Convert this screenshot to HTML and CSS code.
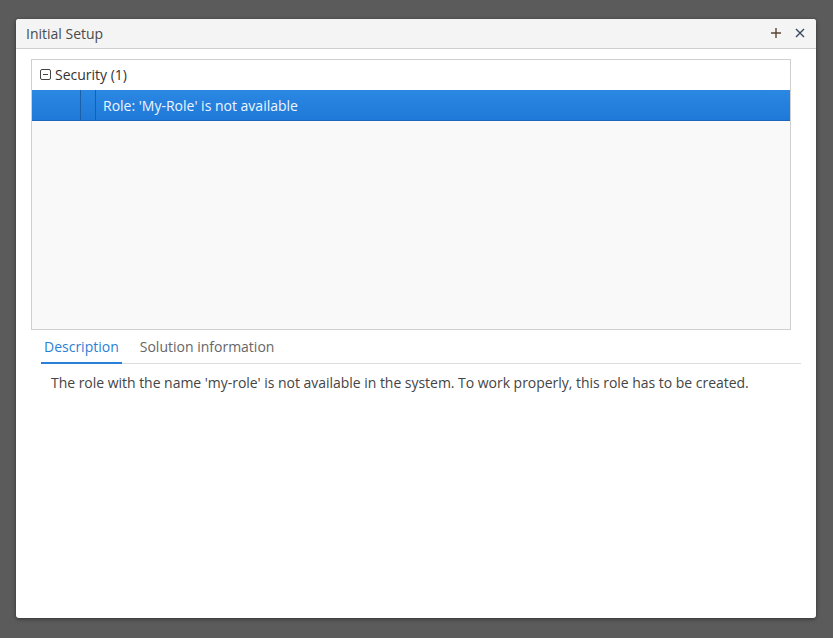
FILE: index.html
```html
<!DOCTYPE html>
<html>
<head>
<meta charset="utf-8">
<link rel="stylesheet" href="styles.css">
</head>
<body>
<div class="window">
  <div class="header">
    <span class="title">Initial Setup</span>
    <div class="actions">
      <svg class="icon" width="12" height="12" viewBox="0 0 12 12"><path d="M6 1v10M1 6h10" stroke="#5a4430" stroke-width="1.4" fill="none"/></svg>
      <svg class="icon" width="12" height="12" viewBox="0 0 12 12"><path d="M2 2l8 8M10 2l-8 8" stroke="#3a4a5e" stroke-width="1.4" fill="none"/></svg>
    </div>
  </div>
  <div class="content">
    <div class="tree">
      <div class="group">
        <svg class="toggle" width="11" height="11" viewBox="0 0 11 11"><rect x="0.5" y="0.5" width="10" height="10" rx="1.5" fill="none" stroke="#444"/><path d="M3 5.5h5" stroke="#444"/></svg>
        <span>Security (1)</span>
      </div>
      <div class="item selected">
        <div class="cell c1"></div>
        <div class="cell c2"></div>
        <div class="cell c3">Role: 'My-Role' is not available</div>
      </div>
    </div>
    <div class="tabs">
      <div class="tab active">Description</div>
      <div class="tab">Solution information</div>
    </div>
    <div class="desc">The role with the name 'my-role' is not available in the system. To work properly, this role has to be created.</div>
  </div>
</div>
</body>
</html>
```
FILE: styles.css
```css
html, body { margin: 0; padding: 0; }
body {
  background: #5b5b5b;
  width: 833px;
  height: 638px;
  font-family: "Open Sans", sans-serif;
  font-size: 14px;
  color: #444;
  padding: 19px 0 0 16px;
  box-sizing: border-box;
}
.window {
  width: 800px;
  height: 599px;
  background: #fff;
  border-radius: 3px;
  box-shadow: 0 1px 4px rgba(0,0,0,0.45);
  display: flex;
  flex-direction: column;
  overflow: hidden;
}
.header {
  height: 29px;
  background: #f4f4f4;
  border-bottom: 1px solid #cfcfcf;
  display: flex;
  align-items: center;
  padding: 0 10px;
}
.title { color: #4a4a4a; font-size: 14px; flex: 1; }
.actions { display: flex; gap: 12px; align-items: center; margin-top: -2px; }
.content { padding: 10px 0 0 15px; }
.tree {
  width: 758px;
  height: 269px;
  border: 1px solid #cfcfcf;
  background: #f9f9f9;
}
.group {
  height: 30px;
  background: #fff;
  display: flex;
  align-items: center;
  padding: 0 0 2px 8px;
  box-sizing: border-box;
  color: #333;
}
.toggle { margin-right: 4px; }
.item {
  height: 31px;
  display: flex;
}
.item.selected {
  background: linear-gradient(#2a88e2, #1f79d8);
  border-bottom: 1px solid #1a66b8;
  box-sizing: border-box;
  color: #fff;
}
.cell { height: 100%; display: flex; align-items: center; }
.c1 { width: 48px; border-right: 1px solid #1b5fa8; }
.c2 { width: 14px; border-right: 1px solid #1b5fa8; }
.c3 { padding-left: 7px; color: #eef5ff; }
.tabs {
  margin: 3px 0 0 10px;
  width: 760px;
  border-bottom: 1px solid #dcdcdc;
  display: flex;
  height: 31px;
  box-sizing: border-box;
}
.tab {
  padding: 4px 3px 0;
  margin-right: 15px;
  color: #666;
}
.tab.active {
  color: #2a7fd6;
  border-bottom: 2px solid #2a7fd6;
  margin-bottom: -1px;
}
.desc {
  padding: 9px 0 0 20px;
  color: #444;
  letter-spacing: -0.03px;
}
```
